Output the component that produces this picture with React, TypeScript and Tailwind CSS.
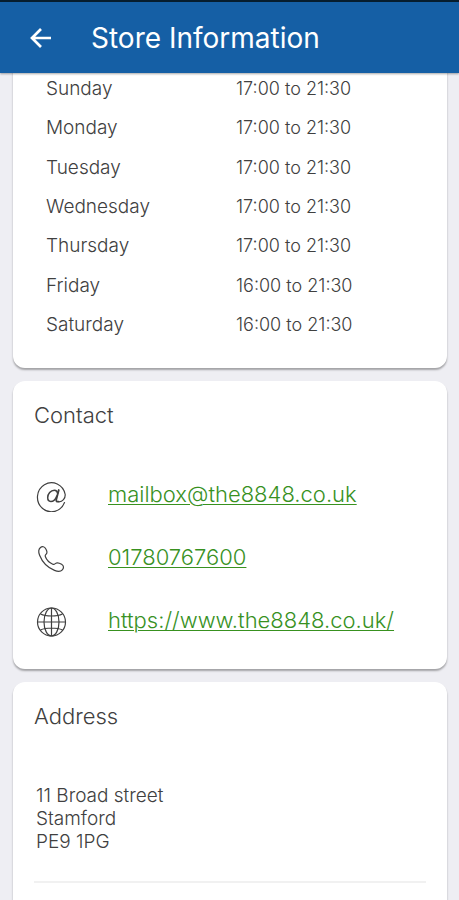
import type { ReactNode } from 'react';

const hours = [
  { day: 'Sunday', time: '17:00 to 21:30' },
  { day: 'Monday', time: '17:00 to 21:30' },
  { day: 'Tuesday', time: '17:00 to 21:30' },
  { day: 'Wednesday', time: '17:00 to 21:30' },
  { day: 'Thursday', time: '17:00 to 21:30' },
  { day: 'Friday', time: '16:00 to 21:30' },
  { day: 'Saturday', time: '16:00 to 21:30' },
];

function BackIcon() {
  return (
    <svg className="size-6" viewBox="0 0 24 24" fill="none" stroke="currentColor" strokeWidth="2.7" aria-hidden="true">
      <path d="M22 12H3.500M12 3l-9 9 9 9" />
    </svg>
  );
}

function AtIcon() {
  return (
    <svg className="size-8" viewBox="0 0 32 32" fill="none" stroke="currentColor" strokeLinecap="round" aria-hidden="true">
      <path strokeWidth="1.200" d="M28.500 22.500A14 14.500 0 1 1 29.200 14.500c.2 4-2.700 7.300-6.200 7.300" />
      <path strokeWidth="1.800" d="M22.800 10 20.300 19.500c-.4 1.600.5 2.500 2.200 2.100" />
      <path strokeWidth="1.500" d="M21.600 13.500c-.2-2.200-1.300-3.300-3.200-3.300-3.800 0-6.700 3.800-6.700 7.400 0 2.400 1.100 3.900 3.100 3.900 2.700 0 5-2.700 6-5.500" />
    </svg>
  );
}

function PhoneIcon() {
  return (
    <svg className="size-8" viewBox="0 0 32 32" fill="none" stroke="currentColor" strokeWidth="1.2" strokeLinejoin="round" aria-hidden="true">
      <path d="M4.500 4.500C6.300 3 8.500 3.600 9.700 5.700c1.200 2 1.800 3.800.7 5.100-.8 1-1.600 1.300-1.100 2.700 1.200 3.300 4.300 6.300 7.500 7.700 1.300.6 1.800 0 2.800-.8 1.700-1.300 3.700-.5 6 .9 2.500 1.500 2.300 3.700.7 5.500-1.600 1.900-4.500 1.900-7.800.6C11.800 24.700 6.200 19 3.600 12.300 2.300 9 2.400 6.200 4.500 4.500Z" />
    </svg>
  );
}

function GlobeIcon() {
  return (
    <svg className="size-8" viewBox="0 0 32 32" fill="none" stroke="currentColor" strokeWidth="1.2" aria-hidden="true">
      <circle cx="15.500" cy="16" r="14" />
      <ellipse cx="15.500" cy="16" rx="7.500" ry="14" />
      <path d="M15.500 2v28M1.500 16h28M4.500 8c3 1.500 7 2 11 2s8-.5 11-2M4.500 24c3-1.500 7-2 11-2s8 .5 11 2" />
    </svg>
  );
}

function ContactRow({ icon, href, children }: { icon: ReactNode; href: string; children: ReactNode }) {
  return (
    <li className="flex h-[63px] items-center gap-10">
      {icon}
      <a href={href} className="pb-1 text-[22px] leading-6 font-light text-[#38911f] underline decoration-1 underline-offset-2">
        {children}
      </a>
    </li>
  );
}

function Card({ title, className, children }: { title: string; className: string; children: ReactNode }) {
  return (
    <section className={`bg-white px-[21px] pt-[22px] shadow-[0_2px_2px_rgba(0,0,0,0.32)] ${className}`}>
      <h2 className="text-[22px] leading-6 font-light">{title}</h2>
      {children}
    </section>
  );
}

export default function App() {
  return (
    <div className="flex min-h-screen flex-col bg-[#eeeef3] font-['Inter',sans-serif] text-[#404040]">
      <header className="sticky top-0 z-10 flex h-[73px] items-center gap-[38px] border-t-2 border-[#061d2e] bg-[#155fa5] px-[29px] text-white shadow-[0_1px_2px_rgba(0,0,0,0.35)]">
        <button type="button" aria-label="Back">
          <BackIcon />
        </button>
        <h1 className="text-[28px] leading-8">Store Information</h1>
      </header>

      <main className="-mt-1 flex flex-1 flex-col gap-[13px] px-3 pl-[13px]">
        <section className="rounded-b-xl bg-white px-[33px] pb-[23px] shadow-[0_2px_2px_rgba(0,0,0,0.32)]">
          <table className="h-[276px] w-full table-fixed text-left text-lg leading-6 font-light">
            <tbody>
              {hours.map(({ day, time }) => (
                <tr key={day}>
                  <th scope="row" className="w-[190px] p-0 text-[19px] leading-6 font-light">{day}</th>
                  <td className="p-0">{time}</td>
                </tr>
              ))}
            </tbody>
          </table>
        </section>

        <Card title="Contact" className="rounded-xl pb-4">
          <ul className="mt-[37px] px-0.5">
            <ContactRow icon={<AtIcon />} href="mailto:mailbox@the8848.co.uk">mailbox@the8848.co.uk</ContactRow>
            <ContactRow icon={<PhoneIcon />} href="tel:01780767600">01780767600</ContactRow>
            <ContactRow icon={<GlobeIcon />} href="https://www.the8848.co.uk/">https://www.the8848.co.uk/</ContactRow>
          </ul>
        </Card>

        <Card title="Address" className="flex-1 rounded-t-xl">
          <address className="mt-14 border-b-2 border-[#f1f1f1] px-0.5 pb-7 text-[19px] leading-[23px] font-light not-italic">
            11 Broad street
            <br />
            Stamford
            <br />
            PE9 1PG
          </address>
        </Card>
      </main>
    </div>
  );
}
